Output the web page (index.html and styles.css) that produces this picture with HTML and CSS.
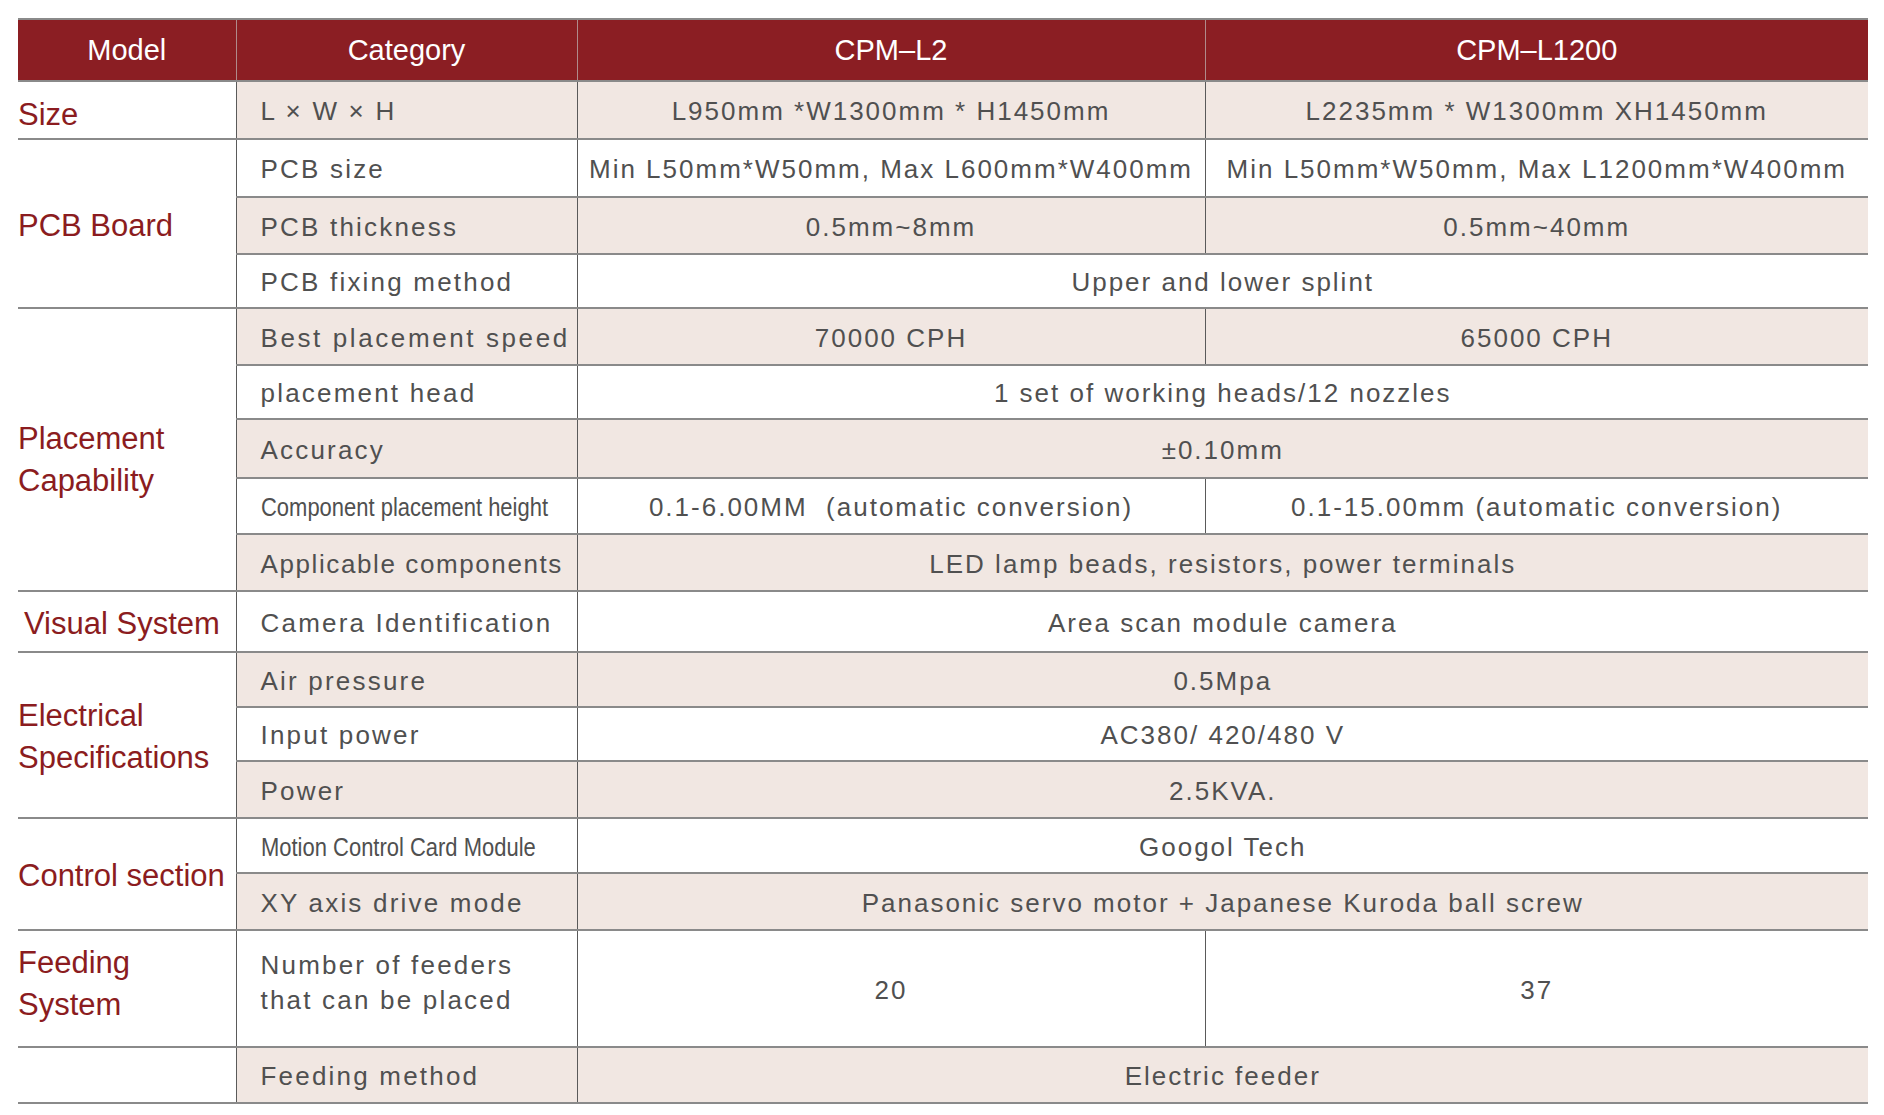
FILE: index.html
```html
<!DOCTYPE html>
<html lang="en">
<head>
<meta charset="utf-8">
<title>CPM Specifications</title>
<link rel="stylesheet" href="styles.css">
</head>
<body>
<div class="page">
<table class="spec">
  <colgroup>
    <col class="c-model">
    <col class="c-cat">
    <col class="c-a">
    <col class="c-b">
  </colgroup>
  <thead>
    <tr class="head">
      <th>Model</th>
      <th>Category</th>
      <th>CPM–L2</th>
      <th>CPM–L1200</th>
    </tr>
  </thead>
  <tbody>
    <tr class="alt r58">
      <td class="model size">Size</td>
      <td class="cat">L × W × H</td>
      <td class="val">L950mm *W1300mm * H1450mm</td>
      <td class="val">L2235mm * W1300mm XH1450mm</td>
    </tr>
    <tr class="r58">
      <td class="model" rowspan="3">PCB Board</td>
      <td class="cat">PCB size</td>
      <td class="val">Min L50mm*W50mm, Max L600mm*W400mm</td>
      <td class="val">Min L50mm*W50mm, Max L1200mm*W400mm</td>
    </tr>
    <tr class="alt r57">
      <td class="cat">PCB thickness</td>
      <td class="val">0.5mm~8mm</td>
      <td class="val">0.5mm~40mm</td>
    </tr>
    <tr class="r54">
      <td class="cat">PCB fixing method</td>
      <td class="val" colspan="2">Upper and lower splint</td>
    </tr>
    <tr class="alt r57">
      <td class="model lower" rowspan="5">Placement<br>Capability</td>
      <td class="cat wide">Best placement speed</td>
      <td class="val">70000 CPH</td>
      <td class="val">65000 CPH</td>
    </tr>
    <tr class="r54">
      <td class="cat">placement head</td>
      <td class="val" colspan="2">1 set of working heads/12 nozzles</td>
    </tr>
    <tr class="alt r59">
      <td class="cat">Accuracy</td>
      <td class="val" colspan="2">±0.10mm</td>
    </tr>
    <tr class="r56">
      <td class="cat narrow"><span class="squeeze">Component placement height</span></td>
      <td class="val">0.1-6.00MM&nbsp; (automatic conversion)</td>
      <td class="val">0.1-15.00mm (automatic conversion)</td>
    </tr>
    <tr class="alt r57">
      <td class="cat tight">Applicable components</td>
      <td class="val" colspan="2">LED lamp beads, resistors, power terminals</td>
    </tr>
    <tr class="r61">
      <td class="model indent">Visual System</td>
      <td class="cat">Camera Identification</td>
      <td class="val" colspan="2">Area scan module camera</td>
    </tr>
    <tr class="alt r55">
      <td class="model" rowspan="3">Electrical<br>Specifications</td>
      <td class="cat">Air pressure</td>
      <td class="val" colspan="2">0.5Mpa</td>
    </tr>
    <tr class="r54">
      <td class="cat">Input power</td>
      <td class="val" colspan="2">AC380/ 420/480 V</td>
    </tr>
    <tr class="alt r57">
      <td class="cat">Power</td>
      <td class="val" colspan="2">2.5KVA.</td>
    </tr>
    <tr class="r55">
      <td class="model" rowspan="2">Control section</td>
      <td class="cat narrow"><span class="squeeze">Motion Control Card Module</span></td>
      <td class="val" colspan="2">Googol Tech</td>
    </tr>
    <tr class="alt r57">
      <td class="cat">XY axis drive mode</td>
      <td class="val" colspan="2">Panasonic servo motor + Japanese Kuroda ball screw</td>
    </tr>
    <tr class="r117">
      <td class="model higher">Feeding<br>System</td>
      <td class="cat two">Number of feeders<br>that can be placed</td>
      <td class="val">20</td>
      <td class="val">37</td>
    </tr>
    <tr class="alt r56">
      <td class="model"></td>
      <td class="cat">Feeding method</td>
      <td class="val" colspan="2">Electric feeder</td>
    </tr>
  </tbody>
</table>
</div>
</body>
</html>
```

FILE: styles.css
```css
html, body {
  margin: 0;
  padding: 0;
  background: #ffffff;
}

.page {
  padding: 18px 16px 10px 18px;
}

.spec {
  width: 1850px;
  table-layout: fixed;
  border-collapse: collapse;
  font-family: "Liberation Sans", Arial, sans-serif;
  color: #505050;
}

.c-model { width: 218px; }
.c-cat { width: 341px; }
.c-a { width: 628px; }
.c-b { width: 663px; }

.head th {
  height: 60px;
  padding: 0;
  background: #8b1e23;
  color: #ffffff;
  font-weight: normal;
  font-size: 29px;
  text-align: center;
  vertical-align: middle;
  border-top: 2px solid #8a8a8a;
  border-left: 1px solid #b08a8b;
}

.head th:first-child {
  border-left: none;
}

.spec td {
  padding: 0;
  vertical-align: middle;
  white-space: nowrap;
  overflow: hidden;
  border-top: 2px solid #8a8a8a;
  border-bottom: 2px solid #8a8a8a;
  border-left: 1px solid #5a5a5a;
}

.spec tr.alt td {
  background: #f1e7e2;
}

.spec tr.alt td.model {
  background: #ffffff;
}

.spec td.model {
  background: #ffffff;
  border-left: none;
  color: #8b1c20;
  font-size: 31px;
  line-height: 42px;
  text-align: left;
  padding-top: 4px;
}

.spec td.model.size {
  padding-top: 9px;
}

.spec td.model.indent {
  padding-left: 6px;
}

.spec td.model.lower {
  padding-top: 20px;
}

.spec td.model.higher {
  padding-top: 0;
  padding-bottom: 10px;
}

.spec td.cat {
  padding-left: 24px;
  font-size: 26px;
  letter-spacing: 2.2px;
  text-align: left;
  padding-top: 3px;
}

.spec td.cat.wide {
  letter-spacing: 2.6px;
}

.spec td.cat.tight {
  letter-spacing: 1.6px;
}

.spec td.cat.narrow {
  letter-spacing: 0;
}

.squeeze {
  display: inline-block;
  transform: scaleX(0.845);
  transform-origin: left center;
}

.spec td.cat.two {
  line-height: 35px;
  padding-top: 0;
  padding-bottom: 12px;
}

.spec td.val {
  font-size: 26px;
  letter-spacing: 2px;
  text-align: center;
  padding-top: 3px;
}

.r54 { height: 54px; }
.r55 { height: 55px; }
.r56 { height: 56px; }
.r57 { height: 57px; }
.r58 { height: 58px; }
.r59 { height: 59px; }
.r61 { height: 61px; }
.r117 { height: 117px; }
```
